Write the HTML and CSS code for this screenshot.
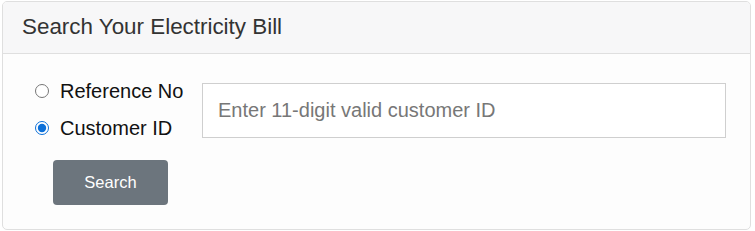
FILE: index.html
```html
<!DOCTYPE html>
<html>
<head>
<meta charset="utf-8">
<link rel="stylesheet" href="styles.css">
</head>
<body>
<div class="card">
  <div class="card-header">Search Your Electricity Bill</div>
  <div class="card-body">
    <div class="row">
      <div class="options">
        <label class="opt"><input type="radio" name="t"> Reference No</label>
        <label class="opt"><input type="radio" name="t" checked> Customer ID</label>
      </div>
      <input class="field" type="text" placeholder="Enter 11-digit valid customer ID">
    </div>
    <button class="btn">Search</button>
  </div>
</div>
</body>
</html>
```
FILE: styles.css
```css
html, body { margin: 0; padding: 0; background: #ffffff; }
body { font-family: "Liberation Sans", Arial, sans-serif; color: #212529; padding: 1px 4px 0 2px; }
.card {
  width: 749px;
  height: 229px;
  border: 1px solid #dfdfdf;
  border-radius: 5px;
  background: #fdfdfd;
  box-sizing: border-box;
  overflow: hidden;
}
.card-header {
  height: 52px;
  box-sizing: border-box;
  background: #f7f7f8;
  border-bottom: 1px solid #dfdfdf;
  padding: 12px 0 0 19px;
  font-size: 22.4px;
  color: #333;
}
.card-body { padding: 25px 0 0 0; }
.row { display: flex; align-items: flex-start; }
.options { display: flex; flex-direction: column; gap: 13px; padding: 0 0 0 32px; width: 167px; }
.opt { display: flex; align-items: center; font-size: 20px; color: #111; height: 24px; white-space: nowrap; }
.opt input { margin: 0 11px 0 0; width: 14px; height: 14px; accent-color: #0b6fd8; }
.field {
  margin-top: 4px;
  width: 524px;
  height: 55px;
  box-sizing: border-box;
  border: 1px solid #cfcfcf;
  background: #fff;
  padding: 0 15px;
  font-family: "Liberation Sans", Arial, sans-serif;
  font-size: 20px;
  outline: none;
}
.field::placeholder { color: #777; }
.btn {
  margin: 20px 0 0 50px;
  width: 115px;
  height: 45px;
  border: none;
  border-radius: 4px;
  background: #6c757d;
  color: #fff;
  font-family: "Liberation Sans", Arial, sans-serif;
  font-size: 16.5px;
}
```
